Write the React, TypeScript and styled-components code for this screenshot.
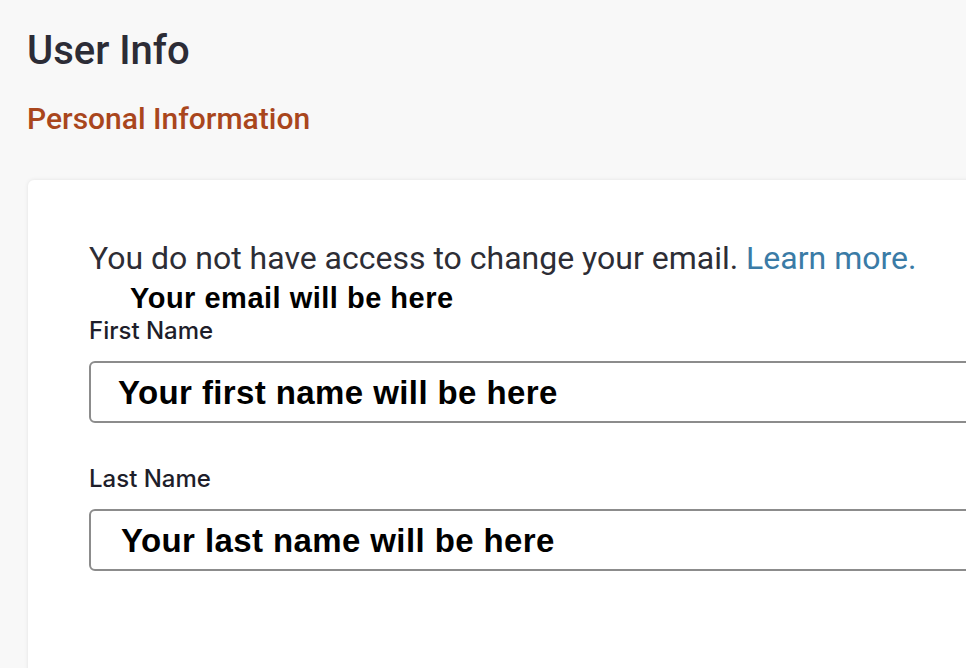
import styled, { createGlobalStyle } from "styled-components";

const GlobalStyle = createGlobalStyle`
  html, body {
    margin: 0;
    padding: 0;
    background: #f8f8f8;
    overflow: hidden;
  }
  body {
    font-family: Roboto, "Noto Sans", sans-serif;
  }
`;

const Page = styled.div`
  width: 966px;
  height: 668px;
  padding: 26px 0 0 27px;
  box-sizing: border-box;
  overflow: hidden;
`;

const Title = styled.h1`
  margin: 0;
  font-size: 40px;
  line-height: 50px;
  font-weight: 500;
  color: #2c2c36;
`;

const Subtitle = styled.h2`
  margin: 25px 0 0;
  font-size: 30px;
  line-height: 36px;
  font-weight: 500;
  color: #a9461d;
`;

const Card = styled.section`
  margin: 43px 0 0 1px;
  width: 1200px;
  height: 600px;
  padding: 58px 0 0 61px;
  box-sizing: border-box;
  background: #fff;
  border-radius: 6px;
  box-shadow: 0 0 4px rgba(0, 0, 0, 0.09);
`;

const Notice = styled.p`
  margin: 0;
  font-size: 32px;
  line-height: 40px;
  color: #2d2d35;
`;

const LearnMore = styled.a`
  color: #3a7ba6;
  text-decoration: none;
`;

const Value = styled.div`
  margin: 4px 0 0 41px;
  font-family: "Liberation Sans", Arial, sans-serif;
  font-weight: 700;
  font-size: 29px;
  letter-spacing: 0.5px;
  line-height: 32px;
  color: #000;
`;

const Field = styled.div<{ $gap: number }>`
  margin-top: ${({ $gap }) => $gap}px;
  display: flex;
  flex-direction: column;
`;

const Label = styled.label`
  font-family: Inter, Roboto, sans-serif;
  font-size: 24px;
  font-weight: 500;
  line-height: 28px;
  color: #1e1e2a;
`;

const InputBox = styled.div<{ $indent: number }>`
  margin-top: 16px;
  width: 1000px;
  height: 62px;
  box-sizing: border-box;
  border: 2px solid #8c8c8c;
  border-radius: 6px;
  padding: 2px 0 0 ${({ $indent }) => $indent}px;
  display: flex;
  align-items: center;
  font-family: "Liberation Sans", Arial, sans-serif;
  font-weight: 700;
  font-size: 33px;
  letter-spacing: 0.4px;
  color: #000;
`;

export default function App() {
  return (
    <Page>
      <GlobalStyle />
      <Title>User Info</Title>
      <Subtitle>Personal Information</Subtitle>
      <Card>
        <Notice>
          You do not have access to change your email.{" "}
          <LearnMore href="#">Learn more.</LearnMore>
        </Notice>
        <Value>Your email will be here</Value>
        <Field $gap={3}>
          <Label>First Name</Label>
          <InputBox $indent={27}>Your first name will be here</InputBox>
        </Field>
        <Field $gap={42}>
          <Label>Last Name</Label>
          <InputBox $indent={30}>Your last name will be here</InputBox>
        </Field>
      </Card>
    </Page>
  );
}
